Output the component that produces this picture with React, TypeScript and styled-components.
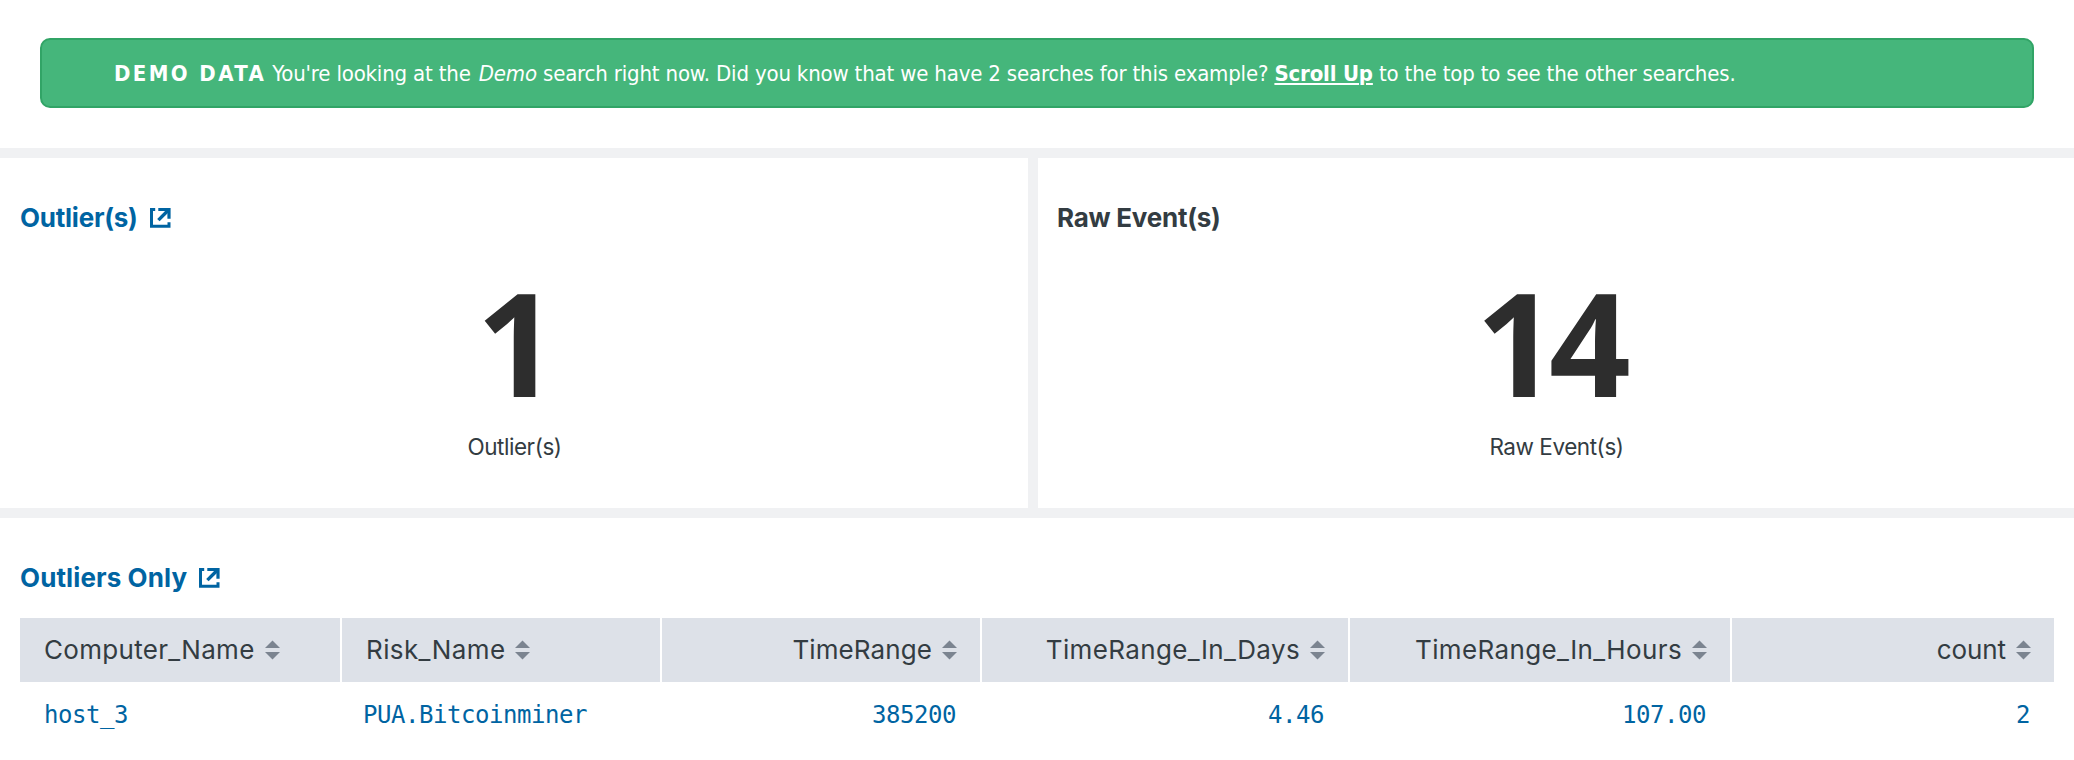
import React from "react";
import styled, { createGlobalStyle } from "styled-components";

const GlobalStyle = createGlobalStyle`
  * { box-sizing: border-box; }
  body {
    margin: 0;
    background: #fff;
    color: #333c42;
    font-family: Inter, "Liberation Sans", sans-serif;
  }
`;

const Dashboard = styled.main`
  width: 2074px;
  height: 760px;
  overflow: hidden;
  display: flex;
  flex-direction: column;
  gap: 10px;
  background: #f0f1f3;
`;

const BannerPanel = styled.section`
  height: 148px;
  padding: 38px 40px 0;
  background: #fff;
`;

const Banner = styled.div`
  height: 70px;
  display: flex;
  align-items: center;
  padding: 2px 0 0 72px;
  border: 2px solid #31a466;
  border-radius: 10px;
  background: #45b67b;
  color: #fff;
  font: 22px/30px "DejaVu Sans Condensed", "DejaVu Sans", sans-serif;
  letter-spacing: -0.175px;
`;

const BannerText = styled.p`
  margin: 0;
  white-space: nowrap;
`;

const BannerTag = styled.strong`
  letter-spacing: 2.4px;
`;

const BannerEmphasis = styled.em`
  margin: 0 0 0 2px;
`;

const BannerLink = styled.a`
  color: inherit;
  font-weight: 700;
  text-decoration: underline;
  text-decoration-thickness: 2px;
  text-underline-offset: 2px;
`;

const MetricRow = styled.div`
  height: 350px;
  display: grid;
  grid-template-columns: 1028px 1036px;
  gap: 10px;
`;

const Panel = styled.section`
  background: #fff;
  padding: 40px 19px 0;
`;

const TablePanel = styled(Panel)`
  flex: 1;
`;

const Title = styled.h2<{ $link?: boolean; $tracking: number }>`
  display: flex;
  align-items: center;
  gap: ${(p) => (p.$link ? 12 : 0)}px;
  height: 40px;
  margin: 0;
  padding-left: ${(p) => (p.$link ? 1 : 0)}px;
  color: ${(p) => (p.$link ? "#0064a2" : "#333c42")};
  font-size: 26px;
  line-height: 40px;
  letter-spacing: ${(p) => p.$tracking}px;
  font-weight: 700;
`;

const Metric = styled.div`
  display: flex;
  flex-direction: column;
  align-items: center;
  padding-top: 42px;
`;

const MetricValue = styled.div<{ $after: number }>`
  height: 124px;
  margin-right: ${(p) => p.$after}px;
  color: #2d2d2d;
  font-family: "Open Sans", sans-serif;
  font-size: 143px;
  line-height: 124px;
  font-weight: 700;
  letter-spacing: -8.5px;
`;

const MetricLabel = styled.div`
  margin-top: 28px;
  padding-left: 1px;
  font-size: 22.5px;
  line-height: 30px;
  letter-spacing: -0.45px;
`;

const Table = styled.div`
  display: grid;
  grid-template-columns: 320px 318px 318px 366px 380px 322px;
  column-gap: 2px;
  margin: 20px 1px 0;
`;

const Cell = styled.div<{ $right?: boolean }>`
  display: flex;
  align-items: center;
  justify-content: ${(p) => (p.$right ? "flex-end" : "flex-start")};
  height: 64px;
  white-space: nowrap;
`;

const HeaderCell = styled(Cell)<{ $tracking: number }>`
  gap: 10px;
  padding: 0 23px 1px 24px;
  background: #dde1e8;
  font-size: 26px;
  letter-spacing: ${(p) => p.$tracking}px;
`;

const ValueCell = styled(Cell)`
  padding: 1px 24px 0 21px;
  color: #0064a2;
  font: 24px "DejaVu Sans Mono", monospace;
  letter-spacing: -0.45px;

  &:nth-child(6n + 1) {
    padding-left: 24px;
  }
`;

const Glyph = styled.svg`
  display: block;
  flex: none;
`;

const ExternalIcon = () => (
  <Glyph width="21" height="20" viewBox="0 0 21 20" fill="none" stroke="currentColor" strokeWidth="3">
    <path d="M5.2 1.5H1.5V18.3H19V14.2" />
    <path d="M8.3 1.5H19V10.8" strokeWidth="3.2" />
    <path d="M18 2.5L8.4 12.1" strokeWidth="3.4" />
  </Glyph>
);

const SortIcon = () => (
  <Glyph width="15" height="20" viewBox="0 0 15 20" fill="#7b8490">
    <path d="M7.5 .5L15 8H0Z" />
    <path d="M0 12H15L7.5 19.5Z" />
  </Glyph>
);

const columns = [
  { name: "Computer_Name", value: "host_3", right: false, tracking: 0.3 },
  { name: "Risk_Name", value: "PUA.Bitcoinminer", right: false, tracking: 0.4 },
  { name: "TimeRange", value: "385200", right: true, tracking: 0.1 },
  { name: "TimeRange_In_Days", value: "4.46", right: true, tracking: 0.38 },
  { name: "TimeRange_In_Hours", value: "107.00", right: true, tracking: 0.37 },
  { name: "count", value: "2", right: true, tracking: -0.1 },
];

export default function App() {
  return (
    <>
      <GlobalStyle />
      <Dashboard>
        <BannerPanel>
          <Banner>
            <BannerText>
              <BannerTag>DEMO DATA</BannerTag> You're looking at the <BannerEmphasis>Demo</BannerEmphasis> search
              right now. Did you know that we have 2 searches for this example? <BannerLink>Scroll Up</BannerLink> to
              the top to see the other searches.
            </BannerText>
          </Banner>
        </BannerPanel>
        <MetricRow>
          <Panel>
            <Title $link $tracking={-0.25}>
              Outlier(s) <ExternalIcon />
            </Title>
            <Metric>
              <MetricValue $after={2}>1</MetricValue>
              <MetricLabel>Outlier(s)</MetricLabel>
            </Metric>
          </Panel>
          <Panel>
            <Title $tracking={-0.25}>Raw Event(s)</Title>
            <Metric>
              <MetricValue $after={14}>14</MetricValue>
              <MetricLabel>Raw Event(s)</MetricLabel>
            </Metric>
          </Panel>
        </MetricRow>
        <TablePanel>
          <Title $link $tracking={0.1}>
            Outliers Only <ExternalIcon />
          </Title>
          <Table>
            {columns.map((c) => (
              <HeaderCell key={c.name} $right={c.right} $tracking={c.tracking}>
                {c.name}
                <SortIcon />
              </HeaderCell>
            ))}
            {columns.map((c) => (
              <ValueCell key={c.name} $right={c.right}>
                {c.value}
              </ValueCell>
            ))}
          </Table>
        </TablePanel>
      </Dashboard>
    </>
  );
}
